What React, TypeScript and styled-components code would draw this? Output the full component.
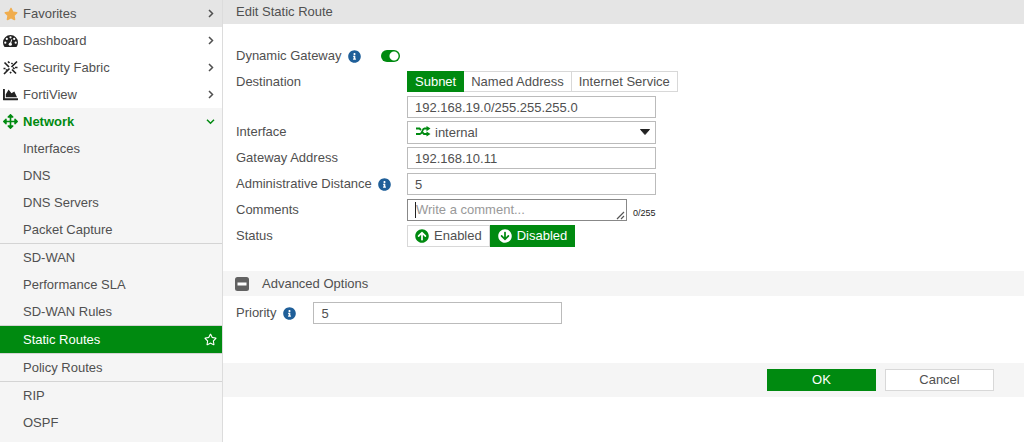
import React, { useState } from "react";
import styled, { createGlobalStyle, css } from "styled-components";
import {
  FaStar,
  FaRegStar,
  FaChartArea,
  FaArrowsAlt,
  FaInfoCircle,
  FaArrowCircleUp,
  FaArrowCircleDown,
} from "react-icons/fa";

const green = "#008a10";
const ink = "#505050";

const GlobalStyle = createGlobalStyle`
  * { box-sizing: border-box; }
  body {
    margin: 0;
    background: #fff;
    color: ${ink};
    font: 13px/20px "Liberation Sans", Arial, sans-serif;
  }
  button, input, select, textarea { font: inherit; color: inherit; margin: 0; border-radius: 0; }
`;

const Page = styled.div`
  display: grid;
  grid-template-columns: 223px minmax(0, 1fr);
  min-height: 100vh;
`;

const Sidebar = styled.nav`
  display: flex;
  flex-direction: column;
  border-right: 1px solid #dcdcdc;
  background: #f5f5f5;
`;

const MenuItem = styled.a<{ $tone?: "favorites" | "open" }>`
  display: flex;
  align-items: center;
  gap: 5px;
  height: 27px;
  padding: 0 7px 0 3px;
  color: ${ink};
  text-decoration: none;
  background: #fff;
  ${(p) => p.$tone === "favorites" && css`background: #e5e5e5;`}
  ${(p) => p.$tone === "open" && css`background: #f5f5f5; color: ${green}; font-weight: bold;`}
`;

const MenuIcon = styled.span<{ $color?: string }>`
  display: flex;
  justify-content: center;
  width: 15px;
  color: ${(p) => p.$color || "#222"};
`;

const MenuLabel = styled.span`
  flex: 1;
`;

const SubGroup = styled.div`
  border-bottom: 1px solid #d4d4d4;
  &:last-child { border-bottom: 0; }
`;

const SubItem = styled.a<{ $active?: boolean }>`
  display: flex;
  align-items: center;
  justify-content: space-between;
  height: 27px;
  padding: 0 5px 0 23px;
  color: ${(p) => (p.$active ? "#fff" : ink)};
  background: ${(p) => (p.$active ? green : "transparent")};
  text-decoration: none;
`;

const Main = styled.main`
  min-width: 0;
`;

const Title = styled.h1`
  margin: 0;
  padding: 2px 13px;
  font-size: 13px;
  line-height: 20px;
  font-weight: normal;
  background: #e5e5e5;
`;

const Form = styled.form`
  margin: 0;
`;

const Fields = styled.div`
  display: flex;
  flex-direction: column;
  gap: 3px;
  padding: 20px 13px 23px;
`;

const Row = styled.div`
  display: flex;
  min-height: 23px;
`;

const ToggleRow = styled.div`
  display: flex;
  align-items: center;
  gap: 20px;
  height: 24px;
`;

const Caption = styled.div`
  display: flex;
  align-items: center;
  gap: 6px;
  flex: 0 0 171px;
  height: 22px;
`;

const InlineCaption = styled.div`
  display: flex;
  align-items: center;
  gap: 7px;
`;

const InfoIcon = styled(FaInfoCircle)`
  width: 13px;
  height: 13px;
  color: #1f5f99;
`;

const Switch = styled.input`
  appearance: none;
  width: 19px;
  height: 12px;
  margin: 0;
  border-radius: 6px;
  background: ${(p) =>
    p.checked
      ? `radial-gradient(circle at 13px 6px, #fff 4px, ${green} 5px)`
      : "radial-gradient(circle at 6px 6px, #fff 4px, #999 5px)"};
`;

const Stack = styled.div`
  display: flex;
  flex-direction: column;
  gap: 4px;
`;

const Segments = styled.div`
  display: flex;
`;

const Segment = styled.button<{ $on?: boolean; $tall?: boolean }>`
  display: flex;
  align-items: center;
  gap: 5px;
  height: ${(p) => (p.$tall ? 22 : 21)}px;
  padding: 0 7px;
  border: 1px solid ${(p) => (p.$on ? green : "#d8d8d8")};
  background: ${(p) => (p.$on ? green : "#fff")};
  color: ${(p) => (p.$on ? "#fff" : ink)};
  white-space: nowrap;
  &:not(:first-child) { border-left-width: ${(p) => (p.$on ? 1 : 0)}px; }
  svg { color: ${(p) => (p.$on ? "#fff" : green)}; }
`;

const TextInput = styled.input`
  width: 249px;
  height: 22px;
  padding: 0 7px;
  border: 1px solid #bbb;
  background: #fff;
  outline: 0;
`;

const SelectBox = styled.div`
  position: relative;
  width: 249px;
  height: 23px;
`;

const Select = styled.select`
  appearance: none;
  width: 100%;
  height: 100%;
  padding: 0 24px 0 27px;
  border: 1px solid #bbb;
  background: #fff;
`;

const SelectIcon = styled.svg`
  position: absolute;
  left: 9px;
  top: 5px;
  color: ${green};
`;

const SelectArrow = styled.svg`
  position: absolute;
  right: 6px;
  top: 8px;
`;

const CommentBox = styled.div`
  position: relative;
  width: 220px;
  height: 22px;
`;

const Comment = styled.textarea`
  display: block;
  width: 100%;
  height: 100%;
  padding: 0 8px;
  border: 1px solid #888;
  outline: 0;
  resize: none;
  overflow: hidden;
  &::placeholder { color: #999; }
`;

const Caret = styled.span`
  position: absolute;
  left: 8px;
  top: 3px;
  width: 1px;
  height: 16px;
  background: #222;
`;

const Grip = styled.svg`
  position: absolute;
  right: 2px;
  bottom: 1px;
`;

const Counter = styled.span`
  align-self: flex-end;
  margin-left: 6px;
  font-size: 9px;
  line-height: 18px;
  color: #222;
`;

const SectionBar = styled.button`
  display: flex;
  align-items: center;
  gap: 13px;
  width: 100%;
  height: 25px;
  padding: 0 12px;
  border: 0;
  background: #f5f5f5;
`;

const PriorityRow = styled.div`
  display: flex;
  align-items: center;
  gap: 17px;
  padding: 6px 13px 39px;
`;

const Footer = styled.footer`
  display: flex;
  justify-content: flex-end;
  gap: 9px;
  padding: 6px 30px;
  background: #f5f5f5;
`;

const ActionButton = styled.button<{ $primary?: boolean }>`
  width: 109px;
  height: 22px;
  padding: 0 0 2px;
  border: 1px solid ${(p) => (p.$primary ? green : "#d8d8d8")};
  background: ${(p) => (p.$primary ? green : "#fff")};
  color: ${(p) => (p.$primary ? "#fff" : ink)};
`;

const Chevron = ({ down }: { down?: boolean }) => (
  <svg width="9" height="9" viewBox="0 0 9 9" fill="none" stroke="currentColor" strokeWidth="1.5">
    <path d={down ? "M1 2.8 4.5 6.3 8 2.8" : "M3 1 6.500 4.500 3 8"} />
  </svg>
);

const GaugeIcon = () => (
  <svg width="15" height="12" viewBox="0 0 15 12">
    <path d="M7.500 0A7.500 7.500 0 0 0 0 7.500c0 1.500.400 2.800 1.100 4 .2.300.4.500.8.500h11.200c.4 0 .6-.2.8-.5.7-1.200 1.100-2.500 1.100-4A7.500 7.500 0 0 0 7.500 0z" fill="currentColor" />
    <g fill="#fff">
      <circle cx="2.300" cy="7.700" r="1.100" />
      <circle cx="3.800" cy="3.900" r="1.100" />
      <circle cx="7.500" cy="2.300" r="1.100" />
      <circle cx="11.200" cy="3.900" r="1.100" />
      <circle cx="12.700" cy="7.700" r="1.100" />
      <circle cx="7.300" cy="9.200" r="1.600" />
    </g>
    <path d="M7.400 9 8.600 4.800" stroke="#fff" strokeWidth="1" strokeLinecap="round" />
  </svg>
);

const FabricIcon = () => (
  <svg width="15" height="15" viewBox="0 0 15 15" fill="none" stroke="currentColor" strokeWidth="1.7">
    <path d="M1.500 2.500 6 7M9 9.500l4 4M14 1.500 8.500 7M6.500 8.500 1 14M5 1.500l1.500 1.500M8.500 4l1-1M0.500 8.500h2M12 7.500h2.500M10 7.500l1.500 1.500M3 10.500l1-1M7 12l1.200 1.200" />
  </svg>
);

const MinusBox = () => (
  <svg width="14" height="14" viewBox="0 0 14 14">
    <rect width="14" height="14" rx="2.500" fill="#626262" />
    <rect x="2.500" y="5.500" width="9" height="3" fill="#fff" />
  </svg>
);

const groups = [
  ["Interfaces", "DNS", "DNS Servers", "Packet Capture"],
  ["SD-WAN", "Performance SLA", "SD-WAN Rules"],
  ["Static Routes"],
  ["Policy Routes"],
  ["RIP", "OSPF"],
];

export default function App() {
  const [dynamic, setDynamic] = useState(true);
  const [kind, setKind] = useState("Subnet");
  const [enabled, setEnabled] = useState(false);
  return (
    <>
      <GlobalStyle />
      <Page>
        <Sidebar>
          <MenuItem href="#favorites" $tone="favorites">
            <MenuIcon $color="#f0ad4e"><FaStar size={14} /></MenuIcon>
            <MenuLabel>Favorites</MenuLabel><Chevron />
          </MenuItem>
          <MenuItem href="#dashboard">
            <MenuIcon><GaugeIcon /></MenuIcon>
            <MenuLabel>Dashboard</MenuLabel><Chevron />
          </MenuItem>
          <MenuItem href="#fabric">
            <MenuIcon><FabricIcon /></MenuIcon>
            <MenuLabel>Security Fabric</MenuLabel><Chevron />
          </MenuItem>
          <MenuItem href="#fortiview">
            <MenuIcon><FaChartArea size={15} /></MenuIcon>
            <MenuLabel>FortiView</MenuLabel><Chevron />
          </MenuItem>
          <MenuItem href="#network" $tone="open">
            <MenuIcon $color={green}><FaArrowsAlt size={15} /></MenuIcon>
            <MenuLabel>Network</MenuLabel><Chevron down />
          </MenuItem>
          {groups.map((items) => (
            <SubGroup key={items[0]}>
              {items.map((item) => (
                <SubItem key={item} href="#item" $active={item === "Static Routes"}>
                  {item}
                  {item === "Static Routes" && <FaRegStar size={13} />}
                </SubItem>
              ))}
            </SubGroup>
          ))}
        </Sidebar>
        <Main>
          <Title>Edit Static Route</Title>
          <Form onSubmit={(e) => e.preventDefault()}>
            <Fields>
              <ToggleRow>
                <InlineCaption><label htmlFor="dynamic">Dynamic Gateway</label><InfoIcon /></InlineCaption>
                <Switch id="dynamic" type="checkbox" checked={dynamic} onChange={() => setDynamic(!dynamic)} />
              </ToggleRow>
              <Row>
                <Caption><label htmlFor="destination">Destination</label></Caption>
                <Stack>
                  <Segments>
                    {["Subnet", "Named Address", "Internet Service"].map((k) => (
                      <Segment key={k} type="button" $on={k === kind} onClick={() => setKind(k)}>{k}</Segment>
                    ))}
                  </Segments>
                  <TextInput id="destination" defaultValue="192.168.19.0/255.255.255.0" />
                </Stack>
              </Row>
              <Row>
                <Caption><label htmlFor="interface">Interface</label></Caption>
                <SelectBox>
                  <Select id="interface"><option>internal</option></Select>
                  <SelectIcon width="15" height="11" viewBox="0 0 15 11">
                    <path d="M0 2.500h3.500L5 4M0 8h4c2.500 0 2-5.500 4.500-5.500H11M6.500 6.500 8 8h3" fill="none" stroke="currentColor" strokeWidth="1.800" />
                    <path d="M10.500 0 14.500 2.600 10.500 5.200zM10.500 5.400 14.500 8 10.500 10.600z" fill="currentColor" />
                  </SelectIcon>
                  <SelectArrow width="10" height="6" viewBox="0 0 10 6"><path d="M0.500 0.500h9L5 5.500z" fill="#222" stroke="#222" strokeLinejoin="round" /></SelectArrow>
                </SelectBox>
              </Row>
              <Row>
                <Caption><label htmlFor="gateway">Gateway Address</label></Caption>
                <TextInput id="gateway" defaultValue="192.168.10.11" />
              </Row>
              <Row>
                <Caption><label htmlFor="distance">Administrative Distance</label><InfoIcon /></Caption>
                <TextInput id="distance" defaultValue="5" />
              </Row>
              <Row>
                <Caption><label htmlFor="comments">Comments</label></Caption>
                <CommentBox>
                  <Comment id="comments" rows={1} placeholder="Write a comment..." />
                  <Caret />
                  <Grip width="9" height="9" viewBox="0 0 9 9" stroke="#555" strokeWidth="1.2"><path d="M1 8 8 1M5 8l3-3" /></Grip>
                </CommentBox>
                <Counter>0/255</Counter>
              </Row>
              <Row>
                <Caption>Status</Caption>
                <Segments>
                  <Segment type="button" $tall $on={enabled} onClick={() => setEnabled(true)}><FaArrowCircleUp size={14} />Enabled</Segment>
                  <Segment type="button" $tall $on={!enabled} onClick={() => setEnabled(false)}><FaArrowCircleDown size={14} />Disabled</Segment>
                </Segments>
              </Row>
            </Fields>
            <SectionBar type="button"><MinusBox />Advanced Options</SectionBar>
            <PriorityRow>
              <InlineCaption><label htmlFor="priority">Priority</label><InfoIcon /></InlineCaption>
              <TextInput id="priority" defaultValue="5" />
            </PriorityRow>
            <Footer>
              <ActionButton type="submit" $primary>OK</ActionButton>
              <ActionButton type="button">Cancel</ActionButton>
            </Footer>
          </Form>
        </Main>
      </Page>
    </>
  );
}
